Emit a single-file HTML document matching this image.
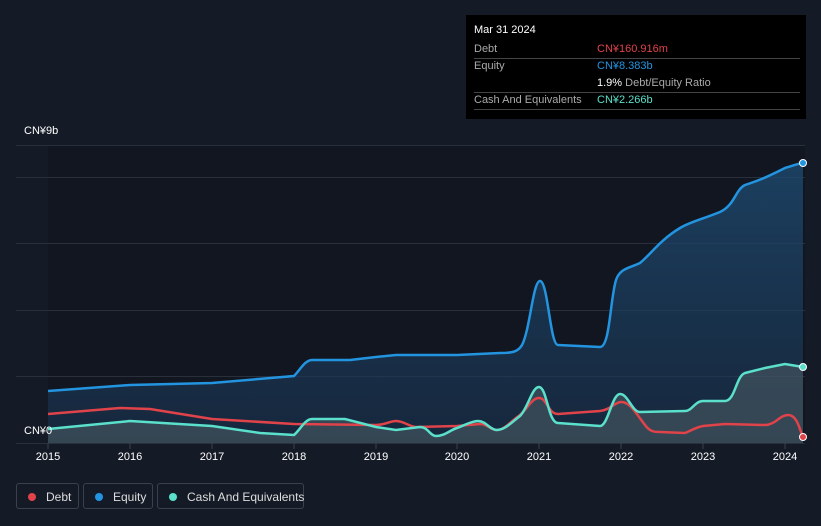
<!DOCTYPE html>
<html><head><meta charset="utf-8"><style>
body{margin:0;width:821px;height:526px;background:#151b26;font-family:"Liberation Sans",sans-serif;overflow:hidden;position:relative}
.t{position:absolute;color:#fff;font-size:11px}
.tip{position:absolute;left:466px;top:15px;width:340px;height:104px;background:#000;}
.row{position:absolute;left:8px;width:326px;border-bottom:1px solid #444;font-size:11px;color:#aaa;height:17px;line-height:17px}
.leg{position:absolute;top:483px;height:26px;border:1px solid #3a404c;border-radius:3px;color:#ddd;font-size:12px;line-height:26px;white-space:nowrap;box-sizing:border-box}
.dot{display:inline-block;width:8px;height:8px;border-radius:50%;margin:0 10px 0 11px;vertical-align:0px}
</style></head><body>
<svg width="821" height="526" style="position:absolute;left:0;top:0">
<rect x="48" y="145" width="757" height="298" fill="#111620"/>
<g stroke="#2a303b" stroke-width="1">
<line x1="16" y1="145.5" x2="805" y2="145.5"/><line x1="16" y1="177.5" x2="805" y2="177.5"/>
<line x1="16" y1="243.5" x2="805" y2="243.5"/><line x1="16" y1="310.5" x2="805" y2="310.5"/>
<line x1="16" y1="376.5" x2="805" y2="376.5"/><line x1="16" y1="443.5" x2="805" y2="443.5"/>
</g>
<defs>
<linearGradient id="ge" x1="0" y1="0" x2="0" y2="1"><stop offset="0" stop-color="#1e4a70" stop-opacity=".8"/><stop offset="1" stop-color="#1a3350" stop-opacity=".6"/></linearGradient>
</defs>
<path d="M48,391 L130,385 L212,383 L294,376 C300,370 305,360 312,360 L350,360 L376,357 L396,355 L457,355 L500,353 C512,353 518,352 522,345 C530,330 533,281 540,281 C548,281 550,345 558,345 L600,347 C610,347 610,300 616,280 C620,268 630,268 640,263 C650,255 660,240 680,228 C690,222 700,220 720,212 C735,205 735,190 745,185 C760,180 765,178 785,168 C795,165 800,163 803,163 L803,443 L48,443 Z" fill="url(#ge)"/>
<path d="M48,429 L130,421 L212,426 L260,433 L294,435 C300,430 305,419 312,419 L345,419 L376,427 L396,430 L420,427 C428,427 430,436 436,436 C445,436 450,430 457,428 C465,425 472,421 478,421 C486,421 490,430 497,430 C505,430 512,422 520,416 C528,408 532,387 539,387 C547,387 548,423 558,423 L600,426 C608,426 612,394 620,394 C628,394 632,412 640,412 L685,411 C692,411 695,401 703,401 L725,401 C735,401 736,376 745,373 L765,368 L785,364 L803,367 L803,443 L48,443 Z" fill="#5a6a6e" fill-opacity=".45"/>
<path d="M48,391 L130,385 L212,383 L294,376 C300,370 305,360 312,360 L350,360 L376,357 L396,355 L457,355 L500,353 C512,353 518,352 522,345 C530,330 533,281 540,281 C548,281 550,345 558,345 L600,347 C610,347 610,300 616,280 C620,268 630,268 640,263 C650,255 660,240 680,228 C690,222 700,220 720,212 C735,205 735,190 745,185 C760,180 765,178 785,168 C795,165 800,163 803,163" fill="none" stroke="#2394e0" stroke-width="2.5"/>
<path d="M48,414 L120,408 L150,409 L212,419 L294,424 L376,425 C385,425 390,421 396,421 C404,421 410,427 416,427 L457,426 L480,424 C488,424 490,430 497,430 C505,430 512,420 520,415 C528,408 532,398 539,398 C547,398 548,414 558,414 L600,411 C610,410 615,402 621,402 C630,402 635,412 645,425 C650,432 655,432 660,432 L685,433 C692,430 697,427 703,426 L725,424 L765,425 C775,425 780,415 788,415 C798,415 800,432 803,437" fill="none" stroke="#e0434a" stroke-width="2.5"/>
<path d="M48,429 L130,421 L212,426 L260,433 L294,435 C300,430 305,419 312,419 L345,419 L376,427 L396,430 L420,427 C428,427 430,436 436,436 C445,436 450,430 457,428 C465,425 472,421 478,421 C486,421 490,430 497,430 C505,430 512,422 520,416 C528,408 532,387 539,387 C547,387 548,423 558,423 L600,426 C608,426 612,394 620,394 C628,394 632,412 640,412 L685,411 C692,411 695,401 703,401 L725,401 C735,401 736,376 745,373 L765,368 L785,364 L803,367" fill="none" stroke="#5ae0cb" stroke-width="2.5"/>
<circle cx="803" cy="163" r="3.5" fill="#2394e0" stroke="#fff" stroke-width="1"/>
<circle cx="803" cy="367" r="3.5" fill="#5ae0cb" stroke="#fff" stroke-width="1"/>
<circle cx="803" cy="437" r="3.5" fill="#e0434a" stroke="#fff" stroke-width="1"/>
<g stroke="#3a404c"><line x1="48" y1="443" x2="48" y2="449"/><line x1="130" y1="443" x2="130" y2="449"/><line x1="212" y1="443" x2="212" y2="449"/><line x1="294" y1="443" x2="294" y2="449"/><line x1="376" y1="443" x2="376" y2="449"/><line x1="457" y1="443" x2="457" y2="449"/><line x1="539" y1="443" x2="539" y2="449"/><line x1="621" y1="443" x2="621" y2="449"/><line x1="703" y1="443" x2="703" y2="449"/><line x1="785" y1="443" x2="785" y2="449"/></g>
<g fill="#fff" font-size="11" font-family="Liberation Sans" text-anchor="middle">
<text x="48" y="460">2015</text><text x="130" y="460">2016</text><text x="212" y="460">2017</text><text x="294" y="460">2018</text><text x="376" y="460">2019</text><text x="457" y="460">2020</text><text x="539" y="460">2021</text><text x="621" y="460">2022</text><text x="703" y="460">2023</text><text x="785" y="460">2024</text>
</g>
</svg>
<div class="t" style="left:24px;top:125px">CN¥9b</div>
<div class="t" style="left:24px;top:425px">CN¥0</div>
<div class="tip">
<div style="position:absolute;left:8px;top:9px;color:#fff;font-size:11px">Mar 31 2024</div>
<div class="row" style="top:26px">Debt<span style="position:absolute;left:123px;color:#e0434a">CN¥160.916m</span></div>
<div class="row" style="top:43px;border:none">Equity<span style="position:absolute;left:123px;color:#2394e0">CN¥8.383b</span></div>
<div class="row" style="top:60px"><span style="position:absolute;left:123px;color:#fff">1.9% <span style="color:#aaa">Debt/Equity Ratio</span></span></div>
<div class="row" style="top:77px">Cash And Equivalents<span style="position:absolute;left:123px;color:#5ae0cb">CN¥2.266b</span></div>
</div>
<div class="leg" style="left:16px;width:63px"><span class="dot" style="background:#e0434a"></span>Debt</div>
<div class="leg" style="left:83px;width:70px"><span class="dot" style="background:#2394e0"></span>Equity</div>
<div class="leg" style="left:157px;width:147px"><span class="dot" style="background:#5ae0cb"></span>Cash And Equivalents</div>
</body></html>
